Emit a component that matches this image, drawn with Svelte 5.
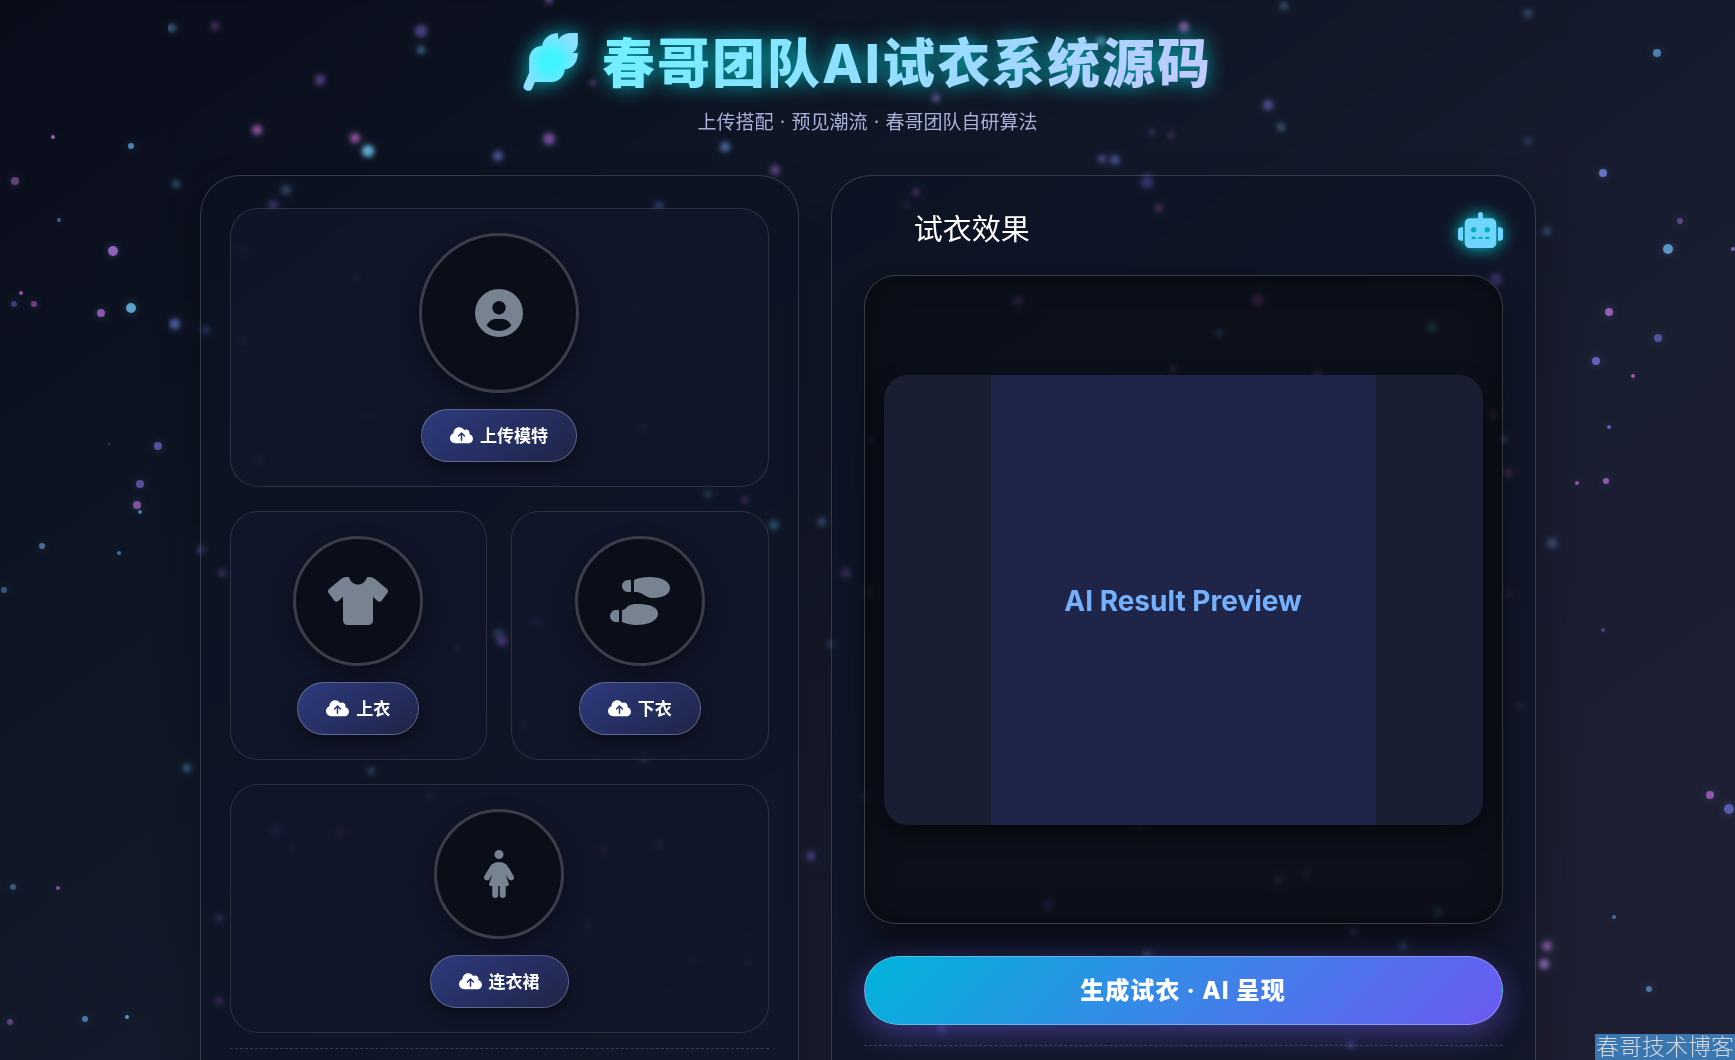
<script>
  // x, y, radius, colour, opacity
  const particles = [
    [53, 137, 2, "#c86dd7", 0.8], [131, 146, 3, "#5b9bd5", 0.8], [15, 181, 4, "#a05aa8", 0.6], [59, 220, 2, "#5577bb", 0.7],
    [113, 251, 5, "#b070dd", 0.8], [21, 293, 2, "#b463d6", 0.8], [14, 304, 3, "#5b55b8", 0.6], [34, 304, 3, "#a34fa0", 0.7],
    [101, 313, 4, "#aa66cc", 0.8], [131, 308, 5, "#6cc0ee", 0.8], [109, 444, 1, "#5b55b8", 0.7], [158, 446, 4, "#7566cc", 0.7],
    [140, 484, 4, "#7a60c8", 0.7], [137, 505, 4, "#b065c8", 0.7], [140, 512, 2, "#62a5dd", 0.7], [42, 546, 3, "#6090cc", 0.7],
    [119, 553, 2, "#5b90cc", 0.7], [4, 590, 3, "#4f80b8", 0.6], [13, 887, 3, "#4f7fae", 0.6], [58, 888, 2, "#b463c6", 0.7],
    [10, 1022, 3, "#8a55aa", 0.6], [85, 1019, 3, "#5b9bd5", 0.7], [127, 1017, 2, "#6cb6e6", 0.8], [172, 28, 4, "#5b9bc5", 0.5],
    [215, 26, 4, "#8855aa", 0.4], [176, 184, 4, "#4b90b5", 0.4], [175, 324, 5, "#6077d5", 0.7], [187, 768, 4, "#5599cc", 0.5],
    [320, 80, 5, "#8855bb", 0.5], [257, 130, 5, "#b65bba", 0.7], [355, 138, 5, "#b65bba", 0.7], [368, 151, 6, "#6cc5ee", 0.8],
    [421, 31, 6, "#7760c5", 0.5], [421, 50, 4, "#5599bb", 0.5], [498, 156, 5, "#6870d0", 0.6], [549, 139, 6, "#a960cc", 0.6],
    [725, 147, 5, "#6087d0", 0.6], [775, 170, 5, "#9060c0", 0.5], [549, 0, 4, "#8855aa", 0.5], [593, 83, 3, "#8855aa", 0.5],
    [936, 98, 4, "#8060b0", 0.6], [1184, 27, 5, "#b670ca", 0.6], [1101, 41, 5, "#70b0dd", 0.5], [1268, 105, 5, "#7060c0", 0.6],
    [1281, 127, 4, "#50a0b0", 0.4], [1152, 132, 3, "#7050a0", 0.4], [1171, 135, 3, "#8050a0", 0.4], [1102, 159, 4, "#8060c0", 0.5],
    [1115, 160, 5, "#6070d0", 0.5], [1284, 6, 4, "#4f88aa", 0.4], [1528, 13, 4, "#5080aa", 0.4], [1528, 141, 4, "#405088", 0.4],
    [1657, 53, 4, "#65a5dd", 0.7], [1603, 173, 4, "#7385e6", 0.8], [1680, 221, 3, "#8055a8", 0.7], [1668, 249, 5, "#6cb0e6", 0.8],
    [1733, 249, 2, "#a06ad8", 0.8], [1609, 312, 4, "#b46dd7", 0.8], [1658, 338, 4, "#6765c0", 0.7], [1596, 361, 4, "#7c6bd8", 0.8],
    [1633, 376, 2, "#c263c6", 0.8], [1609, 427, 2, "#7a6ae0", 0.8], [1606, 481, 3, "#b466d0", 0.8], [1577, 483, 2, "#b463c6", 0.8],
    [1547, 231, 4, "#5088aa", 0.4], [1552, 543, 5, "#6080c0", 0.4], [1603, 630, 2, "#6070c0", 0.5], [1710, 795, 4, "#b060cc", 0.8],
    [1729, 809, 5, "#6068c8", 0.8], [1614, 917, 2, "#5b90cc", 0.7], [1649, 989, 3, "#6099cc", 0.7], [1547, 946, 5, "#a865c6", 0.7],
    [1544, 964, 5, "#a570d0", 0.8], [286, 190, 5, "#5b9bc5", 0.8], [273, 205, 5, "#9063d0", 0.8], [659, 206, 5, "#6075d0", 0.8],
    [206, 330, 4, "#5066aa", 0.8], [242, 341, 5, "#5066aa", 0.8], [357, 277, 5, "#8855aa", 0.6], [242, 250, 4, "#8855aa", 0.6],
    [636, 308, 4, "#6688aa", 0.5], [641, 428, 4, "#8855aa", 0.6], [643, 427, 5, "#5566aa", 0.7], [368, 415, 4, "#a055aa", 0.6],
    [259, 459, 5, "#a055aa", 0.7], [708, 494, 4, "#5599bb", 0.6], [745, 500, 4, "#a055aa", 0.6], [774, 525, 5, "#5bb0dd", 0.8],
    [822, 522, 4, "#5570b0", 0.5], [499, 634, 5, "#6688dd", 0.7], [502, 641, 5, "#a066dd", 0.9], [202, 550, 4, "#8866cc", 0.6],
    [222, 573, 4, "#a060c0", 0.7], [371, 771, 4, "#5599bb", 0.7], [275, 831, 6, "#6060dd", 0.9], [340, 832, 5, "#a060c0", 0.9],
    [292, 848, 4, "#a055aa", 0.8], [603, 850, 4, "#a055aa", 0.8], [659, 845, 5, "#5570b0", 0.9], [588, 926, 4, "#6070dd", 0.9],
    [219, 918, 4, "#8060b0", 0.6], [219, 1001, 4, "#a060c0", 0.6], [694, 961, 4, "#a055aa", 0.7], [748, 963, 4, "#50aabb", 0.7],
    [430, 796, 5, "#6688bb", 0.6], [811, 856, 4, "#6655cc", 0.6], [846, 573, 5, "#9055b0", 0.7], [832, 644, 4, "#5570a0", 0.4],
    [537, 622, 5, "#6060dd", 0.9], [457, 648, 4, "#50aabb", 0.7], [644, 757, 5, "#8060b0", 0.6], [523, 725, 4, "#50aabb", 0.6],
    [916, 192, 4, "#a060c0", 0.7], [907, 205, 3, "#8055aa", 0.5], [1147, 182, 6, "#7068e0", 0.9], [1159, 208, 4, "#b060b0", 0.8],
    [1496, 279, 6, "#8060d0", 0.8], [1018, 301, 5, "#b060c0", 1], [1258, 300, 6, "#d060b8", 1], [1219, 333, 4, "#5599cc", 1],
    [1432, 327, 5, "#55aacc", 1], [1173, 369, 4, "#b060b0", 0.9], [1318, 375, 5, "#b060b0", 0.9], [1493, 415, 4, "#b060b0", 0.9],
    [1503, 439, 4, "#5599cc", 0.7], [1508, 473, 4, "#a050a0", 0.7], [871, 440, 4, "#6060a0", 0.6], [869, 592, 4, "#9060a0", 0.6],
    [1509, 594, 3, "#705088", 0.6], [1520, 706, 3, "#6070a0", 0.5], [867, 797, 4, "#6060a0", 0.6], [1139, 828, 4, "#7070a0", 0.5],
    [1278, 880, 5, "#6060a0", 0.8], [1306, 873, 4, "#6060a0", 0.6], [1048, 905, 5, "#7068e0", 0.9], [1438, 913, 5, "#55aaaa", 0.8],
    [1354, 932, 4, "#7068c0", 0.6], [1403, 946, 4, "#5588cc", 0.7], [1147, 955, 5, "#7080c0", 0.7], [942, 1029, 4, "#7068e0", 0.8],
    [1351, 1045, 4, "#8068e0", 0.8]
  ];
</script>

{#snippet uploadButton(label)}
  <button type="button" class="upload">
    <svg viewBox="0 0 640 512" aria-hidden="true">
      <path d="M144 480C64.500 480 0 415.500 0 336c0-62.800 40.200-116.200 96.200-135.900-.1-2.700-.2-5.400-.2-8.100 0-88.400 71.600-160 160-160 59.300 0 111 32.200 138.700 80.200C409.900 102 428.300 96 448 96c53 0 96 43 96 96 0 12.200-2.300 23.800-6.400 34.600C596 238.400 640 290.100 640 352c0 70.700-57.300 128-128 128H144z" />
      <path class="arrow" d="M320 400V200M238 276l82-82 82 82" />
    </svg>
    <span>{label}</span>
  </button>
{/snippet}

<svg class="particles" aria-hidden="true">
  {#each particles as [x, y, r, color, opacity]}
    <circle cx={x} cy={y} {r} fill={color} {opacity} />
  {/each}
</svg>

<main class="container">
  <header>
    <h1>
      <svg class="feather" viewBox="27 33 164 174" aria-hidden="true">
        <defs>
          <radialGradient id="featherFill">
            <stop offset="0.3" stop-color="#3ff4ff" />
            <stop offset="1" stop-color="#8be0ff" />
          </radialGradient>
        </defs>
        <path fill="url(#featherFill)" d="M131 33C103 35 86 52 84 72C60 72 45 90 45 112V152L29 188C22 206 50 214 55 197L62 180H112C135 180 150 163 152 142C176 140 191 120 191 93H174C185 88 191 75 191 62V33H170C150 34 136 45 133 54Z" />
      </svg>
      <span>春哥团队AI试衣系统源码</span>
    </h1>
    <p class="subtitle">上传搭配 · 预见潮流 · 春哥团队自研算法</p>
  </header>

  <div class="columns">
    <section class="panel uploads">
      <div class="card wide">
        <div class="avatar large">
          <svg viewBox="0 0 512 512" aria-hidden="true">
            <path fill-rule="evenodd" d="M256 0a256 256 0 1 0 0 512 256 256 0 0 0 0-512zm0 128a72 72 0 1 1 0 144 72 72 0 0 1 0-144zm0 320c-53 0-100-22-132-58 17-41 56-70 102-70h60c46 0 85 29 102 70-32 36-79 58-132 58z" />
          </svg>
        </div>
        {@render uploadButton("上传模特")}
      </div>
      <div class="card">
        <div class="avatar">
          <svg viewBox="0 0 640 512" aria-hidden="true">
            <path d="M211.800 0c7.800 0 14.300 5.700 16.700 13.200C240.800 51.900 277.100 80 320 80s79.200-28.100 91.500-66.800C413.900 5.700 420.400 0 428.200 0h12.600c22.500 0 44.200 7.900 61.500 22.300l127.200 106c12.600 10.500 14 29.300 3.200 41.700l-60 82c-11 13.600-31 15.500-44.400 4L480 210v254c0 26.500-21.500 48-48 48H208c-26.500 0-48-21.500-48-48V210l-48.300 46c-13.400 11.500-33.400 9.600-44.400-4l-60-82c-10.800-12.400-9.400-31.200 3.200-41.700l127.200-106C155 7.900 176.800 0 199.200 0h12.600z" />
          </svg>
        </div>
        {@render uploadButton("上衣")}
      </div>
      <div class="card">
        <div class="avatar">
          <svg viewBox="0 0 640 512" aria-hidden="true">
            <path d="M416 0c-56 0-110 9-160 31v129c46 0 66 5 96 24 32 25 68 40 112 40 97 0 176-40 176-104C640 48 552 0 416 0zM224 32h-32c-35 0-64 29-64 64s29 64 64 64h32zM288 288c-57 0-80 10-112 36-20 20-30 28-48 28v128c50 22 96 32 160 32 136 0 224-56 224-120 0-64-79-104-224-104zM96 352H64c-35 0-64 29-64 64s29 64 64 64h32z" />
          </svg>
        </div>
        {@render uploadButton("下衣")}
      </div>
      <div class="card wide">
        <div class="avatar">
          <svg viewBox="0 0 320 512" aria-hidden="true">
            <path d="M160 0a48 48 0 1 1 0 96 48 48 0 0 1 0-96zM88 384H70c-11 0-19-11-15-21l35-105-31 50c-9 16-29 20-44 11s-19-29-10-44l58-97c20-34 57-50 97-50s77 16 97 50l58 97c9 15 5 35-10 44s-35 5-44-11l-31-50 35 105c4 10-4 21-15 21h-18v96c0 18-14 32-32 32s-32-14-32-32v-96h-16v96c0 18-14 32-32 32s-32-14-32-32z" />
          </svg>
        </div>
        {@render uploadButton("连衣裙")}
      </div>
      <hr />
    </section>

    <section class="panel result">
      <div class="result-head">
        <h2>试衣效果</h2>
        <svg class="robot" viewBox="0 0 640 512" aria-hidden="true">
          <path fill-rule="evenodd" d="M320 0c20 0 34 14 34 32v56h118c40 0 72 32 72 72v280c0 40-32 72-72 72H168c-40 0-72-32-72-72V160c0-40 32-72 72-72h118V32c0-18 14-32 34-32zM208 352c-9 0-16 7-16 16s7 16 16 16h32c9 0 16-7 16-16s-7-16-16-16zm96 0c-9 0-16 7-16 16s7 16 16 16h32c9 0 16-7 16-16s-7-16-16-16zm96 0c-9 0-16 7-16 16s7 16 16 16h32c9 0 16-7 16-16s-7-16-16-16zM224 216a38 38 0 1 0 0 76 38 38 0 0 0 0-76zm192 0a38 38 0 1 0 0 76 38 38 0 0 0 0-76zM48 216h24v192H48c-26 0-48-16-48-36V252c0-20 22-36 48-36zm544 0c26 0 48 16 48 36v120c0 20-22 36-48 36h-24V216z" />
        </svg>
      </div>
      <div class="preview">
        <div class="image">
          <div class="image-inner">AI Result Preview</div>
        </div>
      </div>
      <button type="button" class="generate">生成试衣 · AI 呈现</button>
      <hr />
    </section>
  </div>
</main>

<div class="watermark">春哥技术博客</div>

<style>
  :global(body) {
    margin: 0;
    min-height: 100vh;
    background: linear-gradient(145deg, #0a0c1a 0%, #0e1524 30%, #191d30 65%, #1f1f33 100%) fixed;
    color: #fff;
    font-family: Inter, "Noto Sans CJK SC", sans-serif;
  }
  .particles {
    position: fixed;
    inset: 0;
    width: 100%;
    height: 100%;
    filter: drop-shadow(0 0 5px rgba(120, 170, 220, 0.4));
  }
  .container {
    position: relative;
    box-sizing: border-box;
    max-width: 1400px;
    margin: 0 auto;
    padding: 24px 32px;
    backdrop-filter: blur(2px);
  }
  header {
    display: flex;
    flex-direction: column;
    align-items: center;
    height: 151px;
  }
  h1 {
    display: flex;
    align-items: center;
    gap: 24px;
    margin: 0;
    font-size: 53px;
    line-height: 72px;
    font-weight: 800;
    letter-spacing: 2px;
    filter: drop-shadow(0 0 10px rgba(0, 240, 240, 0.7));
  }
  h1 span {
    padding-top: 4px;
    background: linear-gradient(135deg, #6ff1ff, #a0d8ff 65%, #c8c8ff);
    background-clip: text;
    color: transparent;
  }
  .feather {
    width: 55px;
    height: 58px;
  }
  .subtitle {
    margin: 8px 0 0;
    font-family: "DejaVu Sans", "Noto Sans CJK SC", sans-serif;
    font-size: 19px;
    line-height: 28px;
    font-weight: 400;
    color: #a9b1d9;
  }
  .columns {
    display: grid;
    grid-template-columns: 85fr 100fr;
    gap: 32px;
  }
  .panel {
    box-sizing: border-box;
    min-height: 1000px;
    border: 1px solid rgba(255, 255, 255, 0.17);
    border-radius: 40px;
    background: rgba(12, 19, 35, 0.6);
    box-shadow: 0 20px 40px rgba(0, 0, 0, 0.3);
  }
  .uploads {
    display: grid;
    grid-template-columns: 1fr 1fr;
    align-content: start;
    gap: 24px;
    padding: 32px 29px;
  }
  .card {
    display: flex;
    flex-direction: column;
    align-items: center;
    gap: 16px;
    padding: 24px;
    border: 1px solid rgba(255, 255, 255, 0.12);
    border-radius: 28px;
    background: rgba(18, 23, 42, 0.8);
  }
  .wide {
    grid-column: span 2;
  }
  .avatar {
    box-sizing: border-box;
    display: grid;
    place-items: center;
    width: 130px;
    height: 130px;
    border: 3px solid #3c3d48;
    border-radius: 50%;
    background: #0a0e19;
    box-shadow: 0 8px 20px rgba(0, 0, 0, 0.4);
  }
  .avatar.large {
    width: 160px;
    height: 160px;
  }
  .avatar svg {
    height: 48px;
    fill: #778391;
  }
  .upload {
    display: flex;
    align-items: center;
    gap: 7px;
    height: 53px;
    padding: 0 28px;
    border: 1px solid rgba(255, 255, 255, 0.25);
    border-radius: 60px;
    background: linear-gradient(145deg, #2e3a7d, #1e2548);
    box-shadow: 0 6px 14px rgba(0, 0, 0, 0.4);
    color: #fff;
    font: 700 17px/24px Inter, "Noto Sans CJK SC", sans-serif;
    cursor: pointer;
  }
  .upload svg {
    width: 23px;
    fill: #fff;
  }
  .arrow {
    fill: none;
    stroke: #2a3570;
    stroke-width: 42;
    stroke-linecap: round;
    stroke-linejoin: round;
  }
  hr {
    grid-column: 1 / -1;
    width: 100%;
    margin: 0;
    border: 0;
    border-top: 1px dashed rgba(255, 255, 255, 0.17);
  }
  .uploads hr {
    margin-top: -9px;
  }
  .result {
    display: flex;
    flex-direction: column;
    padding: 32px;
  }
  .result-head {
    display: flex;
    align-items: center;
    justify-content: space-between;
    height: 43px;
    margin-bottom: 24px;
    padding-left: 50px;
  }
  h2 {
    margin: 0;
    font-size: 29px;
    line-height: 43px;
    font-weight: 400;
  }
  .robot {
    width: 45px;
    height: 36px;
    fill: #6dd5ff;
    filter: drop-shadow(0 0 8px #00e0e0);
  }
  .preview {
    box-sizing: border-box;
    display: grid;
    place-items: center;
    height: 649px;
    padding: 19px;
    border: 1px solid rgba(255, 255, 255, 0.19);
    border-radius: 32px;
    background: rgba(11, 14, 20, 0.6);
    box-shadow: inset 0 0 30px rgba(0, 0, 0, 0.4), 0 20px 30px rgba(0, 0, 0, 0.4);
  }
  .image {
    display: flex;
    justify-content: center;
    width: 100%;
    height: 450px;
    border-radius: 24px;
    background: #1a1e32;
    box-shadow: 0 10px 20px rgba(0, 0, 0, 0.5);
  }
  .image-inner {
    display: grid;
    place-items: center;
    width: 385px;
    padding-top: 3px;
    box-sizing: border-box;
    background: #1e2548;
    color: #74b0fb;
    font: 700 28px/40px Inter, sans-serif;
  }
  .generate {
    height: 69px;
    margin: 32px 0 20px;
    border: 1px solid rgba(255, 255, 255, 0.3);
    border-radius: 60px;
    background: linear-gradient(135deg, #00b4db, #3a86e8 50%, #6c5af2);
    box-shadow: 0 10px 30px rgba(108, 92, 231, 0.45);
    color: #fff;
    font: 800 24px/36px Inter, "Noto Sans CJK SC", sans-serif;
    letter-spacing: 1px;
    cursor: pointer;
  }
  .watermark {
    position: fixed;
    right: 0;
    bottom: 0;
    padding: 0 1px;
    background: #3a76b0;
    color: #d4d8dc;
    font-size: 23px;
    line-height: 26px;
    font-weight: 300;
  }
</style>
